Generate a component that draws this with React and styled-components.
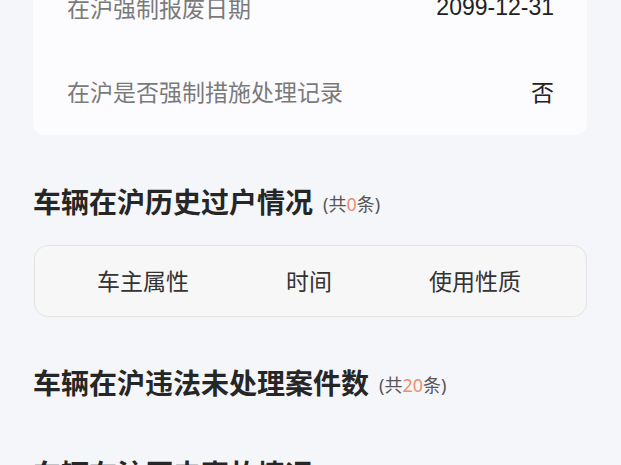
import React from "react";
import styled, { createGlobalStyle } from "styled-components";

const Global = createGlobalStyle`
  html, body { margin: 0; padding: 0; background: #f5f6fa; }
  body {
    font-family: "Liberation Sans", "Noto Sans CJK SC", sans-serif;
    overflow: hidden;
  }
`;

const Page = styled.div`
  width: 621px;
  height: 465px;
  overflow: hidden;
  background: #f5f6fa;
`;

const Scroller = styled.div`
  margin-top: -35px;
  padding: 0 34px 0 33px;
  display: flex;
  flex-direction: column;
`;

const Card = styled.div`
  background: #fcfcfe;
  border-radius: 12px;
  padding: 0 33px 2px 34px;
  display: flex;
  flex-direction: column;
`;

const Row = styled.div`
  height: 84px;
  display: flex;
  align-items: center;
  justify-content: space-between;
  font-size: 23px;
`;

const Label = styled.span`
  color: #7a7a7a;
`;

const Value = styled.span`
  color: #222;
`;

const Section = styled.section`
  margin-top: ${(p) => p.$top}px;
  display: flex;
  flex-direction: column;
`;

const Title = styled.h2`
  margin: 0;
  height: 40px;
  display: flex;
  align-items: center;
  font-size: 28px;
  font-weight: 700;
  color: #262626;
`;

const Count = styled.span`
  font-size: 18px;
  font-weight: 400;
  color: #555;
  margin-left: 10px;
  margin-top: 3px;
  font-family: "Noto Sans", "Noto Sans CJK SC", sans-serif;
`;

const Num = styled.span`
  color: #ea8f6c;
`;

const TableHead = styled.div`
  margin-top: 24px;
  height: 70px;
  margin-left: 1px;
  border: 1px solid #e4e4e4;
  border-radius: 14px;
  background: #f7f7f7;
  padding: 0 28px 0 25px;
  display: grid;
  grid-template-columns: repeat(3, 1fr);
  align-items: center;
`;

const HeadCell = styled.div`
  text-align: center;
  font-size: 23px;
  color: #333;
  margin-top: -2px;
`;

function Heading({ title, n }) {
  return (
    <Title>
      {title}
      <Count>
        (共<Num>{n}</Num>条)
      </Count>
    </Title>
  );
}

export default function App() {
  return (
    <Page>
      <Global />
      <Scroller>
        <Card>
          <Row>
            <Label>在沪强制报废日期</Label>
            <Value>2099-12-31</Value>
          </Row>
          <Row>
            <Label>在沪是否强制措施处理记录</Label>
            <Value>否</Value>
          </Row>
        </Card>
        <Section $top={46}>
          <Heading title="车辆在沪历史过户情况" n="0" />
          <TableHead>
            <HeadCell>车主属性</HeadCell>
            <HeadCell>时间</HeadCell>
            <HeadCell>使用性质</HeadCell>
          </TableHead>
        </Section>
        <Section $top={45}>
          <Heading title="车辆在沪违法未处理案件数" n="20" />
        </Section>
        <Section $top={51}>
          <Title>车辆在沪历史事故情况</Title>
        </Section>
      </Scroller>
    </Page>
  );
}
